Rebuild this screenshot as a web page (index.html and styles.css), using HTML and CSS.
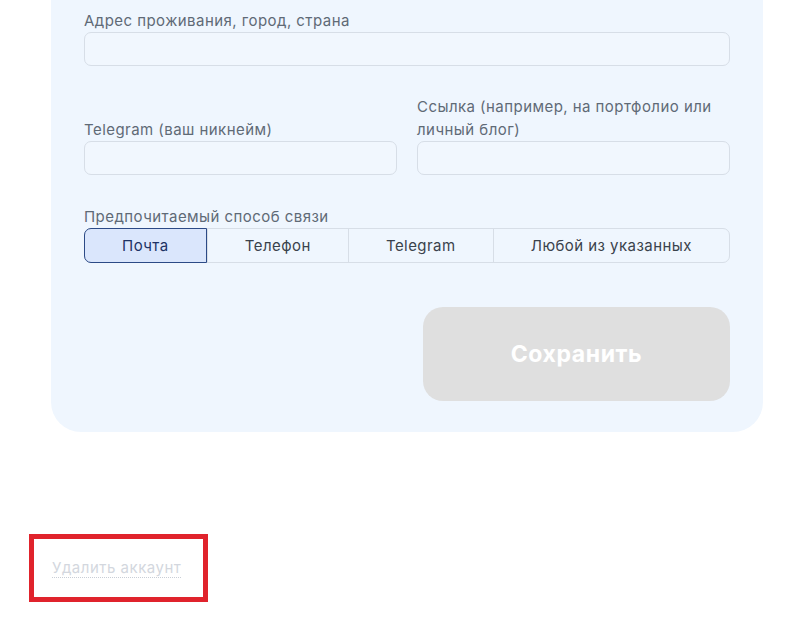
FILE: index.html
```html
<!DOCTYPE html>
<html lang="ru">
<head>
<meta charset="utf-8">
<title>Профиль</title>
<link rel="stylesheet" href="styles.css">
</head>
<body>
<div class="page">
  <form class="card">
    <div class="field">
      <label class="label">Адрес проживания, город, страна</label>
      <div class="input"></div>
    </div>
    <div class="row">
      <div class="field">
        <label class="label">Telegram (ваш никнейм)</label>
        <div class="input"></div>
      </div>
      <div class="field">
        <label class="label">Ссылка (например, на портфолио или личный блог)</label>
        <div class="input"></div>
      </div>
    </div>
    <div class="field contact">
      <label class="label">Предпочитаемый способ связи</label>
      <div class="segments">
        <div class="seg active">Почта</div>
        <div class="seg">Телефон</div>
        <div class="seg">Telegram</div>
        <div class="seg">Любой из указанных</div>
      </div>
    </div>
    <div class="actions">
      <button type="button" class="save">Сохранить</button>
    </div>
  </form>
  <div class="danger">
    <span class="delete">Удалить аккаунт</span>
  </div>
</div>
</body>
</html>
```

FILE: styles.css
```css
* { box-sizing: border-box; }
html, body { margin: 0; padding: 0; background: #ffffff; }
body {
  font-family: "Inter", "Noto Sans", "DejaVu Sans", sans-serif;
  font-size: 15px;
  color: #333b45;
  letter-spacing: 0.45px;
}
.page {
  padding: 0 37px 0 51px;
}
.card {
  display: flex;
  flex-direction: column;
  background: #eff6fe;
  border-radius: 0 0 30px 30px;
  padding: 9px 33px 31px 33px;
}
.field {
  display: flex;
  flex-direction: column;
}
.label {
  display: block;
  color: #5f6a76;
  font-size: 15px;
  line-height: 23px;
}
.input {
  height: 34px;
  border: 1px solid #d7dee7;
  border-radius: 7px;
  background: #f1f7fe;
}
.row {
  display: grid;
  grid-template-columns: 1fr 1fr;
  column-gap: 20px;
  margin-top: 29px;
  align-items: end;
}
.contact {
  margin-top: 30px;
}
.segments {
  display: flex;
  height: 35px;
  border: 1px solid #d7dee7;
  border-radius: 7px;
}
.seg {
  flex: 1 1 auto;
  display: flex;
  align-items: center;
  justify-content: center;
  color: #3a424c;
  font-size: 15px;
  border-left: 1px solid #d7dee7;
}
.seg:first-child { border-left: none; }
.seg.active {
  margin: -1px 0 -1px -1px;
  background: #dae6fc;
  border: 1px solid #2c4a86;
  border-radius: 7px 0 0 7px;
  color: #1d3264;
}
.actions {
  display: flex;
  justify-content: flex-end;
  margin-top: 44px;
}
.save {
  width: 307px;
  height: 94px;
  border: none;
  border-radius: 20px;
  background: #dfdfdf;
  color: #ffffff;
  font-family: inherit;
  font-size: 23px;
  font-weight: 700;
  letter-spacing: 0.6px;
}
.danger {
  width: 179px;
  height: 68px;
  margin: 102px 0 0 -22px;
  border: 5px solid #e0232c;
  padding: 0 0 0 18px;
  display: flex;
  align-items: center;
}
.delete {
  color: #d3d7de;
  font-size: 15px;
  line-height: 18px;
  letter-spacing: 0.5px;
  border-bottom: 1px dotted #c9ced6;
  margin-top: 0;
}
```
